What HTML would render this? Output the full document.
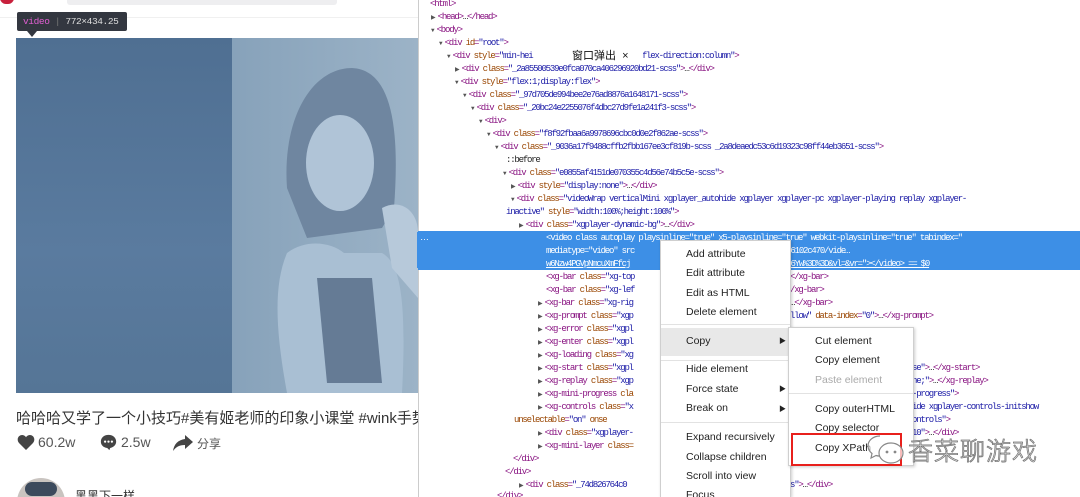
<!DOCTYPE html>
<html style="width:1080px;height:497px;overflow:hidden"><head><meta charset="utf-8"><style>
*{margin:0;padding:0;box-sizing:border-box}
html,body{width:1080px;height:497px;overflow:hidden}
body{background:#fff;position:relative;font-family:"Liberation Sans","Noto Sans CJK SC",sans-serif}
.abs{position:absolute}
.dt{position:absolute;left:418px;top:0;width:662px;height:497px;background:#fff;border-left:1px solid #ccc}
.ln{position:absolute;white-space:nowrap;font-family:"Liberation Mono",monospace;font-size:9px;letter-spacing:-1.2px;line-height:12px;color:#881280}
.an{color:#994500}.av{color:#1a1aa6}.tx{color:#222}
.ar{font-size:6px;color:#555;letter-spacing:0;margin-right:2px}
.sel{position:absolute;left:418px;top:231px;width:662px;height:39px;background:#3d8fe6}
.menu{position:absolute;background:#fff;border:1px solid #cfcfcf;box-shadow:1px 1px 3px rgba(0,0,0,.2);font-size:10.5px;color:#222;overflow:hidden}
.mi{position:absolute;left:25px;white-space:nowrap}
.sep{position:absolute;left:0;right:0;height:1px;background:#e2e2e2}
</style></head><body>
<div class="abs" style="left:0;top:-8px;width:14px;height:12px;border-radius:7px;background:#c8203c"></div>
<div class="abs" style="left:67px;top:0;width:270px;height:5px;background:#eeeef0;border-radius:0 0 3px 3px"></div>
<div class="abs" style="left:0;top:17px;width:418px;height:1px;background:#f0f0f0"></div>
<div class="abs" style="left:17px;top:12px;width:110px;height:19px;background:#333740;border-radius:2px;font-family:'Liberation Mono',monospace;font-size:9.5px;line-height:19px;color:#ddd;padding-left:6px;letter-spacing:-0.4px"><span style="color:#e15fd2">video</span> <span style="color:#777">|</span> 772×434.25</div>
<div class="abs" style="left:27px;top:31px;width:0;height:0;border-left:5px solid transparent;border-right:5px solid transparent;border-top:6px solid #333740"></div>
<div class="abs" style="left:16px;top:38px;width:216px;height:355px;background:linear-gradient(180deg,#4f6f92,#5a7b9f 60%,#557596)"></div>
<div class="abs" style="left:232px;top:38px;width:186px;height:355px;background:linear-gradient(90deg,#87a2ba,#9cb3c7)"></div>
<svg class="abs" style="left:232px;top:38px" width="186" height="355">
<path d="M55 150 C50 80 80 30 120 30 C160 32 168 90 162 170 L150 190 L75 200 Z" fill="#6f86a0"/>
<ellipse cx="108" cy="125" rx="34" ry="48" fill="#b0c4d7"/>
<path d="M55 215 C75 200 100 205 112 215 L150 215 C168 225 175 260 170 355 L55 355 C45 300 40 250 55 215Z" fill="#a9bfd3"/>
<path d="M85 240 L140 240 L150 345 L95 345 Z" fill="#657b95"/>
<path d="M150 170 C168 160 186 172 186 195 L186 260 L160 230 Z" fill="#b7c9da"/>
</svg>
<div class="abs" style="left:16px;top:407px;font-size:15px;color:#333;white-space:nowrap;width:402px;overflow:hidden">哈哈哈又学了一个小技巧#美有姬老师的印象小课堂 #wink手势</div>
<svg class="abs" style="left:17px;top:434px" width="18" height="17" viewBox="0 0 24 22"><path d="M12 21 L3 12 C-1 8 1 1 7 1 C9.5 1 11 2.5 12 4 C13 2.5 14.5 1 17 1 C23 1 25 8 21 12Z" fill="#444"/></svg>
<div class="abs" style="left:38px;top:434px;font-size:14px;color:#555">60.2w</div>
<svg class="abs" style="left:100px;top:434px" width="17" height="17" viewBox="0 0 20 20"><path d="M10 1C4.5 1 1 4.5 1 9c0 4 3 7 7.5 7.5L11 19l1-2.6C16 15.5 19 13 19 9c0-4.5-3.5-8-9-8z" fill="#444"/><circle cx="6" cy="9" r="1.3" fill="#fff"/><circle cx="10" cy="9" r="1.3" fill="#fff"/><circle cx="14" cy="9" r="1.3" fill="#fff"/></svg>
<div class="abs" style="left:121px;top:434px;font-size:14px;color:#555">2.5w</div>
<svg class="abs" style="left:173px;top:435px" width="20" height="16" viewBox="0 0 20 16"><path d="M12 0 L20 7 L12 14 L12 10 C6 10 3 12 0 16 C1 9 5 5 12 4Z" fill="#444"/></svg>
<div class="abs" style="left:197px;top:435px;font-size:12px;color:#555">分享</div>
<div class="abs" style="left:17px;top:478px;width:48px;height:19px;overflow:hidden"><div style="width:48px;height:48px;border-radius:50%;background:#c9c4c0;overflow:hidden"><div style="margin:4px 8px;width:32px;height:14px;border-radius:12px;background:#3c4a5c"></div></div></div>
<div class="abs" style="left:75px;top:489px;font-size:12px;color:#333;height:8px;overflow:hidden;line-height:14px">黑黑下一样</div>
<div class="abs" style="left:417px;top:232px;width:2px;height:36px;background:#3d8fe6"></div>

<div class="dt"></div>
<div class="sel"></div>
<div class="abs" style="left:420px;top:232px;color:#fff;font-size:9px">…</div>
<div class="ln" style="left:430px;top:-2px">&lt;html&gt;</div>
<div class="ln" style="left:431px;top:11px"><span class="ar">▶</span>&lt;head&gt;<span class="tx">…</span>&lt;/head&gt;</div>
<div class="ln" style="left:431px;top:24px"><span class="ar">▼</span>&lt;body&gt;</div>
<div class="ln" style="left:439px;top:37px"><span class="ar">▼</span>&lt;div <span class="an">id</span>=<span class="av">"root"</span>&gt;</div>
<div class="ln" style="left:447px;top:50px"><span class="ar">▼</span>&lt;div <span class="an">style</span>=<span class="av">"min-hei<span style="display:inline-block;width:80px"></span>y:flex;flex-direction:column"</span>&gt;</div>
<div class="abs" style="left:565px;top:48px;width:78px;height:16px;background:#fff;font-size:11px;color:#111;line-height:16px;padding-left:7px">窗口弹出 &nbsp;×</div>
<div class="ln" style="left:455px;top:63px"><span class="ar">▶</span>&lt;div <span class="an">class</span>=<span class="av">"_2a85500539e0fca070ca406296920bd21-scss"</span>&gt;<span class="tx">…</span>&lt;/div&gt;</div>
<div class="ln" style="left:455px;top:76px"><span class="ar">▼</span>&lt;div <span class="an">style</span>=<span class="av">"flex:1;display:flex"</span>&gt;</div>
<div class="ln" style="left:463px;top:89px"><span class="ar">▼</span>&lt;div <span class="an">class</span>=<span class="av">"_97d705de994bee2e76ad8876a1648171-scss"</span>&gt;</div>
<div class="ln" style="left:471px;top:102px"><span class="ar">▼</span>&lt;div <span class="an">class</span>=<span class="av">"_20bc24e2255076f4dbc27d9fe1a241f3-scss"</span>&gt;</div>
<div class="ln" style="left:479px;top:115px"><span class="ar">▼</span>&lt;div&gt;</div>
<div class="ln" style="left:487px;top:128px"><span class="ar">▼</span>&lt;div <span class="an">class</span>=<span class="av">"f8f92fbaa6a9978696cbc0d0e2f862ae-scss"</span>&gt;</div>
<div class="ln" style="left:495px;top:141px"><span class="ar">▼</span>&lt;div <span class="an">class</span>=<span class="av">"_9036a17f9488cffb2fbb167ee3cf819b-scss _2a8deaedc53c6d19323c98ff44eb3651-scss"</span>&gt;</div>
<div class="ln tx" style="left:506px;top:154px">::before</div>
<div class="ln" style="left:503px;top:167px"><span class="ar">▼</span>&lt;div <span class="an">class</span>=<span class="av">"e0855af4151de070355c4d56e74b5c5e-scss"</span>&gt;</div>
<div class="ln" style="left:511px;top:180px"><span class="ar">▶</span>&lt;div <span class="an">style</span>=<span class="av">"display:none"</span>&gt;<span class="tx">…</span>&lt;/div&gt;</div>
<div class="ln" style="left:511px;top:193px"><span class="ar">▼</span>&lt;div <span class="an">class</span>=<span class="av">"videoWrap verticalMini xgplayer_autohide xgplayer xgplayer-pc xgplayer-playing replay xgplayer-</span></div>
<div class="ln" style="left:506px;top:206px"><span class="av">inactive"</span> <span class="an">style</span>=<span class="av">"width:100%;height:100%"</span>&gt;</div>
<div class="ln" style="left:519px;top:219px"><span class="ar">▶</span>&lt;div <span class="an">class</span>=<span class="av">"xgplayer-dynamic-bg"</span>&gt;<span class="tx">…</span>&lt;/div&gt;</div>
<div class="ln" style="left:546px;top:232px;color:#fff">&lt;video class autoplay playsinline="true" x5-playsinline="true" webkit-playsinline="true" tabindex="</div>
<div class="ln" style="left:546px;top:245px;color:#fff">mediatype="video" src<span style="display:inline-block;width:110px"></span>m/6bc54dd…/6102c470/vide…</div>
<div class="ln" style="left:546px;top:258px;color:#fff;text-decoration:underline">w6Nzw4PGVpNmcuXmFfcj<span style="display:inline-block;width:110px"></span>tXmM2L2NjYDI6Yw%3D%3D&amp;vl=&amp;vr="<span style="text-decoration:none">&gt;&lt;/video&gt; == $0</span></div>
<div class="ln" style="left:546px;top:271px">&lt;xg-bar <span class="an">class</span>=<span class="av">"xg-top</span></div>
<div class="ln" style="left:546px;top:284px">&lt;xg-bar <span class="an">class</span>=<span class="av">"xg-lef</span></div>
<div class="ln" style="left:538px;top:297px"><span class="ar">▶</span>&lt;xg-bar <span class="an">class</span>=<span class="av">"xg-rig</span></div>
<div class="ln" style="left:538px;top:310px"><span class="ar">▶</span>&lt;xg-prompt <span class="an">class</span>=<span class="av">"xgp</span></div>
<div class="ln" style="left:538px;top:323px"><span class="ar">▶</span>&lt;xg-error <span class="an">class</span>=<span class="av">"xgpl</span></div>
<div class="ln" style="left:538px;top:336px"><span class="ar">▶</span>&lt;xg-enter <span class="an">class</span>=<span class="av">"xgpl</span></div>
<div class="ln" style="left:538px;top:349px"><span class="ar">▶</span>&lt;xg-loading <span class="an">class</span>=<span class="av">"xg</span></div>
<div class="ln" style="left:538px;top:362px"><span class="ar">▶</span>&lt;xg-start <span class="an">class</span>=<span class="av">"xgpl</span></div>
<div class="ln" style="left:538px;top:375px"><span class="ar">▶</span>&lt;xg-replay <span class="an">class</span>=<span class="av">"xgp</span></div>
<div class="ln" style="left:538px;top:388px"><span class="ar">▶</span>&lt;xg-mini-progress <span class="an">cla</span></div>
<div class="ln" style="left:538px;top:401px"><span class="ar">▶</span>&lt;xg-controls <span class="an">class</span>=<span class="av">"x</span></div>
<div class="ln" style="left:514px;top:414px"><span class="an">unselectable</span>=<span class="av">"on"</span> <span class="an">onse</span></div>
<div class="ln" style="left:538px;top:427px"><span class="ar">▶</span>&lt;div <span class="an">class</span>=<span class="av">"xgplayer-</span></div>
<div class="ln" style="left:538px;top:440px"><span class="ar">▶</span>&lt;xg-mini-layer <span class="an">class=</span></div>
<div class="ln" style="left:513px;top:453px">&lt;/div&gt;</div>
<div class="ln" style="left:505px;top:466px">&lt;/div&gt;</div>
<div class="ln" style="left:519px;top:479px"><span class="ar">▶</span>&lt;div <span class="an">class</span>=<span class="av">"_74d826764c0</span></div>
<div class="ln" style="left:497px;top:490px">&lt;/div&gt;</div>
<div class="ln" style="left:790px;top:271px">&lt;/xg-bar&gt;</div>
<div class="ln" style="left:790px;top:284px">/xg-bar&gt;</div>
<div class="ln" style="left:790px;top:297px"><span class="tx">…</span>&lt;/xg-bar&gt;</div>
<div class="ln" style="left:790px;top:310px"><span class="av">llow"</span> <span class="an">data-index</span>=<span class="av">"0"</span>&gt;<span class="tx">…</span>&lt;/xg-prompt&gt;</div>
<div class="ln" style="left:912px;top:362px"><span class="av">se"</span>&gt;<span class="tx">…</span>&lt;/xg-start&gt;</div>
<div class="ln" style="left:912px;top:375px"><span class="av">ne;"</span>&gt;<span class="tx">…</span>&lt;/xg-replay&gt;</div>
<div class="ln" style="left:912px;top:388px"><span class="av">-progress"</span>&gt;</div>
<div class="ln" style="left:912px;top:401px"><span class="av">ide  xgplayer-controls-initshow</span></div>
<div class="ln" style="left:912px;top:414px"><span class="av">ontrols"</span>&gt;</div>
<div class="ln" style="left:912px;top:427px"><span class="av">10"</span>&gt;<span class="tx">…</span>&lt;/div&gt;</div>
<div class="ln" style="left:790px;top:479px"><span class="av">s"</span>&gt;<span class="tx">…</span>&lt;/div&gt;</div>

<div class="menu" style="left:660px;top:240px;width:131px;height:257px;border-bottom:none">
<div class="mi" style="top:7px">Add attribute</div>
<div class="mi" style="top:26px">Edit attribute</div>
<div class="mi" style="top:46px">Edit as HTML</div>
<div class="mi" style="top:65px">Delete element</div>
<div class="sep" style="top:83px"></div>
<div style="position:absolute;left:0;right:0;top:87px;height:28px;background:#e8e8e8"></div>
<div class="mi" style="top:94px">Copy</div><div class="abs" style="left:118px;top:95px;font-size:7px">▶</div>
<div class="sep" style="top:119px"></div>
<div class="mi" style="top:122px">Hide element</div>
<div class="mi" style="top:142px">Force state</div><div class="abs" style="left:118px;top:143px;font-size:7px">▶</div>
<div class="mi" style="top:161px">Break on</div><div class="abs" style="left:118px;top:163px;font-size:7px">▶</div>
<div class="sep" style="top:181px"></div>
<div class="mi" style="top:190px">Expand recursively</div>
<div class="mi" style="top:210px">Collapse children</div>
<div class="mi" style="top:229px">Scroll into view</div>
<div class="mi" style="top:248px">Focus</div>
</div>
<div class="menu" style="left:788px;top:327px;width:126px;height:139px">
<div class="mi" style="left:26px;top:7px">Cut element</div>
<div class="mi" style="left:26px;top:26px">Copy element</div>
<div class="mi" style="left:26px;top:46px;color:#aaa">Paste element</div>
<div class="sep" style="top:65px"></div>
<div class="mi" style="left:26px;top:75px">Copy outerHTML</div>
<div class="mi" style="left:26px;top:94px">Copy selector</div>
<div class="mi" style="left:26px;top:114px">Copy XPath</div>
</div>
<div class="abs" style="left:791px;top:433px;width:111px;height:33px;border:2px solid #e8201c"></div>
<svg class="abs" style="left:866px;top:433px" width="40" height="34" viewBox="0 0 40 34"><path d="M14 3C7 3 2 7.5 2 13c0 3 1.5 5.5 4 7.5L5 25l5-2.5c1.3.4 2.6.6 4 .6" fill="rgba(255,255,255,.6)" stroke="#888" stroke-width="1.2"/><ellipse cx="25" cy="20" rx="12" ry="10" fill="rgba(255,255,255,.7)" stroke="#888" stroke-width="1.2"/><circle cx="21" cy="19" r="1.4" fill="#888"/><circle cx="29" cy="19" r="1.4" fill="#888"/></svg>
<div class="abs" style="left:908px;top:434px;font-size:25px;color:rgba(255,255,255,.85);-webkit-text-stroke:0.8px #777;font-family:'Noto Sans CJK SC',sans-serif;font-weight:300;letter-spacing:1px;line-height:32px">香菜聊游戏</div>
</body></html>
